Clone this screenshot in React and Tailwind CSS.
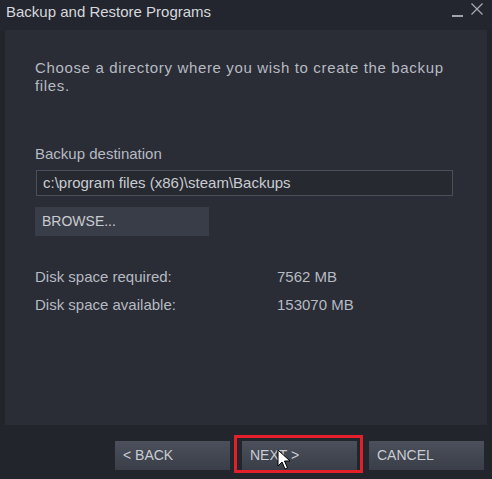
import React from "react";

function Cursor() {
  return (
    <svg
      className="absolute left-[35px] top-[8px] pointer-events-none"
      width="14"
      height="22"
      viewBox="0 0 14 22"
    >
      <path
        d="M1 1 L1 17 L5 13 L8 20 L10.5 19 L7.5 12 L13 12 Z"
        fill="#ffffff"
        stroke="#000000"
        strokeWidth="1"
        strokeLinejoin="round"
      />
    </svg>
  );
}

function FooterButton({ label, children }) {
  return (
    <button className="relative w-[115px] h-[29px] text-left pl-[8px] text-[14px] text-[#c9ccd2] bg-gradient-to-b from-[#4b505c] to-[#3a3e48]">
      {label}
      {children}
    </button>
  );
}

export default function App() {
  return (
    <div
      className="w-[492px] h-[479px] bg-[#22252b] flex flex-col"
      style={{ fontFamily: '"Liberation Sans", Arial, sans-serif' }}
    >
      <div className="h-[30px] flex items-start justify-between pl-[6px] pr-[9px] pt-[3px] bg-[#23262e]">
        <span className="text-[15px] text-[#d6d8dc] leading-[18px]">
          Backup and Restore Programs
        </span>
        <div className="flex items-start gap-[8px]">
          <div className="w-[11px] h-[1.5px] bg-[#a0a4ab] mt-[12px]" />
          <svg width="12" height="12" viewBox="0 0 12 12">
            <path d="M0.5 0.5 L11.5 11.5 M11.5 0.5 L0.5 11.5" stroke="#a7abb2" strokeWidth="1.2" />
          </svg>
        </div>
      </div>

      <div className="mx-[5px] h-[395px] bg-[#2a2d35] pl-[30px] pr-[16px] pt-[29px] text-[15px] text-[#b6bac2]">
        <p className="leading-[18px] tracking-[0.65px]">
          Choose a directory where you wish to create the backup
          <br />
          files.
        </p>

        <div className="mt-[50px] leading-[18px]">Backup destination</div>
        <div className="mt-[7px] ml-[1px] w-[417px] h-[26px] border border-[#4a4f59] bg-[#262930] flex items-center pl-[6px] text-[#c9ccd2]">
          c:\program files (x86)\steam\Backups
        </div>
        <button className="mt-[11px] w-[174px] h-[29px] bg-[#393d47] text-left pl-[7px] text-[14px] text-[#c9ccd2] block">
          BROWSE...
        </button>

        <div className="mt-[32px] flex flex-col gap-[10px] leading-[18px]">
          <div className="flex">
            <span className="w-[242px]">Disk space required:</span>
            <span>7562 MB</span>
          </div>
          <div className="flex">
            <span className="w-[242px]">Disk space available:</span>
            <span>153070 MB</span>
          </div>
        </div>
      </div>

      <div className="flex justify-end gap-[12px] pr-[8px] pt-[16px]">
        <FooterButton label="< BACK" />
        <FooterButton label="NEXT >">
          <span className="absolute left-[-8px] top-[-6px] right-[-6px] bottom-[-3px] border-[3px] border-[#e3202a] pointer-events-none" />
          <Cursor />
        </FooterButton>
        <FooterButton label="CANCEL" />
      </div>
    </div>
  );
}
